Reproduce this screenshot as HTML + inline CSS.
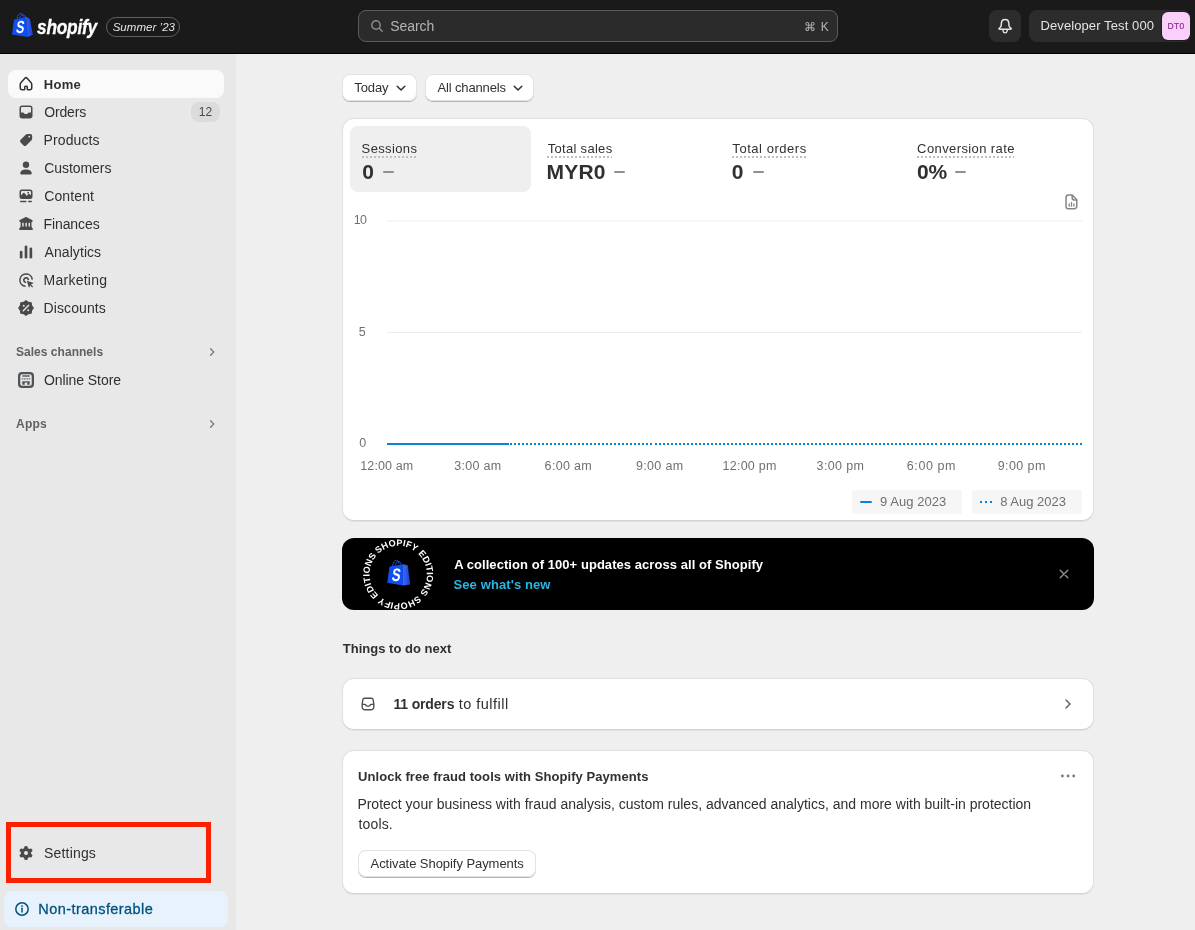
<!DOCTYPE html>
<html lang="en">
<head>
<meta charset="utf-8">
<title>Shopify Admin - Home</title>
<style>
*{box-sizing:border-box;margin:0;padding:0}
html,body{width:1195px;height:930px;overflow:hidden}
body{font-family:"Liberation Sans",sans-serif;background:#efefef;color:#303030;position:relative;font-size:13px}
#app{position:absolute;left:0;top:0;width:1195px;height:930px;will-change:transform;overflow:hidden}
.abs{position:absolute}
.t{position:absolute;white-space:nowrap;line-height:1}
/* top bar */
#top{position:absolute;left:0;top:0;width:1195px;height:54px;background:#1a1a1a;border-bottom:1px solid #000}
#search{position:absolute;left:358px;top:10px;width:480px;height:32px;border:1px solid #5c5c5c;border-radius:8px;background:#2b2b2b}
#bell{position:absolute;left:989px;top:10px;width:32px;height:32px;border-radius:8px;background:#2c2c2c}
#store{position:absolute;left:1029px;top:10px;width:162px;height:32px;border-radius:8px;background:#2c2c2c}
#avatar{position:absolute;left:1162px;top:12px;width:28px;height:28px;border-radius:6px;background:#facffa;box-shadow:0 0 0 1px #1e1e1e}
/* sidebar */
#side{position:absolute;left:0;top:54px;width:236px;height:876px;background:#e8e8e8}
#homebg{position:absolute;left:8px;top:70px;width:216px;height:28px;border-radius:8px;background:#fafafa}
.nav{font-size:14px;color:#303030;left:44px;font-weight:400}
.sec{font-size:13px;color:#616161;left:16px;font-weight:700}
#badge{position:absolute;left:191px;top:102px;width:29px;height:20px;border-radius:8px;background:#dbdbdb}
#redbox{position:absolute;left:6px;top:822px;width:205px;height:61px;border:5px solid #fc2003}
#nont{position:absolute;left:4px;top:891px;width:224px;height:36px;border-radius:8px;background:#e7f2fd}
/* main */
.btn{position:absolute;background:#fff;border-radius:8px;box-shadow:0 1px 0 0 #b5b5b5,0 0 0 1px #e3e3e3 inset;border:0}
.card{position:absolute;left:342px;width:752px;background:#fff;border-radius:12px;border:1px solid #dfdfdf;border-bottom-color:#d2d2d2;box-shadow:0 1px 0 0 rgba(0,0,0,.05)}
#selTab{position:absolute;left:350px;top:126px;width:181px;height:66px;border-radius:8px;background:#efefef}
.lbl{font-size:13px;color:#303030}
.val{font-size:20px;font-weight:700;color:#303030}
.dot{height:2px;background:repeating-linear-gradient(90deg,#bfbfbf 0 2px,transparent 2px 4px)}
.dash{position:absolute;height:2px;width:11px;background:#8c9196;border-radius:1px}
.ax{font-size:12px;color:#6d7175}
#banner{position:absolute;left:342px;top:538px;width:752px;height:72px;border-radius:12px;background:#000}
</style>
</head>
<body>
<div id="app">
<!-- TOPBAR -->
<div id="top">
  <!-- shopify bag -->
  <svg class="abs" style="left:11px;top:12px" width="24" height="27" viewBox="0 0 24 27">
    <defs><linearGradient id="bagg" x1="0" y1="0" x2="1" y2="0"><stop offset="0" stop-color="#3566f7"/><stop offset="1" stop-color="#1a3fd4"/></linearGradient></defs>
    <path d="M6.200 6.600 C6.400 3.600 8 1.400 9.800 1.500 C11 1.600 11.800 2.700 12.200 4.600" fill="none" stroke="#1f55ee" stroke-width="1"/>
    <path d="M8.800 6 C9.400 3.600 10.800 2.400 12.200 2.700 C13.400 3 14 4 14.300 5" fill="none" stroke="#1f55ee" stroke-width="1"/>
    <path d="M3 7.700 L15 4.800 L16.700 24.900 L1 22.400 Z" fill="#0f4ff2"/>
    <path d="M15 4.800 L18.900 6.900 L21.900 22.800 L16.700 24.900 Z" fill="url(#bagg)"/>
    <text transform="translate(8.700 21.100) skewX(-8) scale(.7 1)" text-anchor="middle" font-family="Liberation Sans, sans-serif" font-weight="700" font-size="17.500" fill="#fff">S</text>
  </svg>
  <div class="t" id="wordmark" style="left:36.500px;top:16px;font-size:21px;font-weight:700;font-style:italic;color:#fff;transform-origin:0 0;transform:scaleX(.825);letter-spacing:-.3px;-webkit-text-stroke:.35px #fff">shopify</div>
  <div class="abs" style="left:106px;top:17px;width:74px;height:20px;border:1px solid #616161;border-radius:10px"></div>
  <div class="t" id="summer" style="left:112.66px;top:22px;font-size:11.5px;font-style:italic;color:#e3e3e3;letter-spacing:0.036px">Summer ’23</div>
  <div id="search"></div>
  <svg class="abs" style="left:369px;top:18px" width="16" height="16" viewBox="0 0 16 16"><circle cx="7" cy="7" r="4.200" fill="none" stroke="#8c8c8c" stroke-width="1.400"/><path d="M10.200 10.200 L13.200 13.200" stroke="#8c8c8c" stroke-width="1.400" stroke-linecap="round"/></svg>
  <div class="t" id="searchtxt" style="left:390.32px;top:19px;font-size:14px;color:#b5b5b5;letter-spacing:-0.098px">Search</div>
  <div class="t" id="cmdk" style="left:804.23px;top:21px;font-size:12px;color:#b5b5b5;letter-spacing:0.654px">⌘ K</div>
  <div id="bell"></div>
  <svg class="abs" style="left:995px;top:16px" width="20" height="20" viewBox="0 0 20 20"><path d="M10.100 3.450 C7.900 3.450 6.500 5 6.400 7.200 L6.200 9.600 C6.100 10.600 5.500 11.300 4.600 11.900 C3.600 12.500 3.900 13.300 4.800 13.300 H15.400 C16.300 13.300 16.600 12.500 15.600 11.900 C14.700 11.300 14.100 10.600 14 9.600 L13.800 7.200 C13.700 5 12.300 3.450 10.100 3.450 Z" fill="none" stroke="#e3e3e3" stroke-width="1.500" stroke-linejoin="round"/><path d="M7.900 14 C8.100 15.800 9 16.900 10.100 16.900 C11.200 16.900 12.100 15.800 12.300 14" fill="none" stroke="#e3e3e3" stroke-width="1.400" stroke-linecap="round"/></svg>
  <div id="store"></div>
  <div class="t" id="storetxt" style="left:1040.48px;top:19px;font-size:13px;color:#e3e3e3;letter-spacing:0.101px">Developer Test 000</div>
  <div id="avatar"></div>
  <div class="t" id="avtxt" style="left:1167.42px;top:22px;font-size:8.5px;color:#8e2d8e;font-weight:400;-webkit-text-stroke:.2px #8e2d8e;letter-spacing:0.345px">DT0</div>
</div>
<!-- SIDEBAR -->
<div id="side"></div>
<div id="homebg"></div>
<!-- nav icons: 20x20 boxes at x=16 -->
<svg class="abs ic" style="left:16px;top:74px" width="20" height="20" viewBox="0 0 20 20" fill="#303030"><path fill-rule="evenodd" d="M8.344 3.692a2.25 2.25 0 0 1 3.312 0l3.854 4.19a3.75 3.75 0 0 1 .99 2.538v3.33a2.75 2.75 0 0 1-2.75 2.75h-1.75a1.5 1.5 0 0 1-1.5-1.5v-2h-1v2a1.5 1.5 0 0 1-1.5 1.5h-1.750a2.75 2.75 0 0 1-2.75-2.75v-3.33c0-.94.353-1.847.99-2.539l3.854-4.189zm2.208 1.016a.75.75 0 0 0-1.104 0l-3.854 4.189a2.25 2.25 0 0 0-.594 1.523v3.33c0 .69.56 1.25 1.25 1.25h1.750v-2a1.5 1.5 0 0 1 1.5-1.5h1a1.5 1.5 0 0 1 1.5 1.5v2h1.750c.69 0 1.250-.56 1.250-1.250v-3.330a2.250 2.250 0 0 0-.594-1.523l-3.854-4.190z"/></svg>
<svg class="abs ic" style="left:16px;top:102px" width="20" height="20" viewBox="0 0 20 20" fill="#4a4a4a"><path fill-rule="evenodd" d="M6.25 3.5a2.75 2.75 0 0 0-2.75 2.75v7.5a2.75 2.75 0 0 0 2.75 2.750h7.5a2.75 2.75 0 0 0 2.750-2.750v-7.5a2.75 2.75 0 0 0-2.750-2.750h-7.5zm-1.250 2.750c0-.69.56-1.250 1.250-1.250h7.5c.69 0 1.250.56 1.250 1.250v4.250h-1.880a1.5 1.5 0 0 0-1.200.6l-.6.8a.25.25 0 0 1-.2.1h-2.240a.25.25 0 0 1-.2-.1l-.6-.8a1.5 1.5 0 0 0-1.200-.6h-1.880v-4.250z"/></svg>
<svg class="abs ic" style="left:16px;top:130px" width="20" height="20" viewBox="0 0 20 20" fill="#4a4a4a"><path transform="translate(10.100 9.950) scale(.955) translate(-10.150 -9.900)" fill-rule="evenodd" d="M11.6 3.6 H14.6 A1.9 1.9 0 0 1 16.5 5.500 V8.4 A2.4 2.4 0 0 1 15.800 10.100 L10.300 15.600 A2 2 0 0 1 7.500 15.600 L4.400 12.500 A2 2 0 0 1 4.400 9.700 L9.900 4.300 A2.400 2.400 0 0 1 11.600 3.600 Z M13.500 5.600 A0.900 0.900 0 1 0 13.500 7.400 A0.900 0.900 0 1 0 13.500 5.600 Z"/></svg>
<svg class="abs ic" style="left:16px;top:158px" width="20" height="20" viewBox="0 0 20 20" fill="#4a4a4a"><circle cx="10" cy="6.800" r="3.200"/><path d="M4.300 15.200 C4.300 12.900 6.800 11.500 10 11.500 C13.200 11.500 15.700 12.900 15.700 15.200 C15.700 15.900 15.200 16.500 14.400 16.500 H5.600 C4.800 16.500 4.300 15.900 4.300 15.200 Z"/></svg>
<svg class="abs ic" style="left:16px;top:186px" width="20" height="20" viewBox="0 0 20 20" fill="#4a4a4a"><path fill-rule="evenodd" d="M6 3.500 H14 A2.500 2.500 0 0 1 16.500 6 V10.500 A2.500 2.500 0 0 1 14 13 H6 A2.500 2.500 0 0 1 3.500 10.500 V6 A2.500 2.500 0 0 1 6 3.500 Z M5 9.500 V6 A1 1 0 0 1 6 5 H14 A1 1 0 0 1 15 6 V9.300 L13.600 8 A0.800 0.800 0 0 0 12.500 8 L10.800 9.700 L8.400 7 A0.800 0.800 0 0 0 7.200 7 Z M12.200 5.800 A0.900 0.900 0 1 0 12.200 7.600 A0.900 0.900 0 1 0 12.200 5.800 Z"/><rect x="4" y="14.800" width="6.500" height="1.500" rx=".75"/><rect x="12" y="14.800" width="4" height="1.500" rx=".75"/></svg>
<svg class="abs ic" style="left:16px;top:214px" width="20" height="20" viewBox="0 0 20 20" fill="#4a4a4a"><path d="M9.300 3.300 C9.700 3.050 10.300 3.050 10.700 3.300 L16.200 6 C16.900 6.400 16.700 7.900 16 7.900 H4 C3.300 7.900 3.100 6.400 3.800 6 Z"/><rect x="4.600" y="7.500" width="10.900" height="6"/><rect x="6.250" y="8.800" width="1.450" height="3.900" fill="#e8e8e8"/><rect x="9.400" y="8.800" width="1.450" height="3.900" fill="#e8e8e8"/><rect x="12.550" y="8.800" width="1.450" height="3.900" fill="#e8e8e8"/><path d="M4.600 12.800 H15.400 L16.700 14.400 C17.100 15.100 16.700 16 16 16 H4 C3.300 16 2.900 15.100 3.300 14.400 Z"/></svg>
<svg class="abs ic" style="left:16px;top:242px" width="20" height="20" viewBox="0 0 20 20" fill="#4a4a4a"><rect x="3.800" y="8.700" width="2.700" height="7.800" rx="1.350"/><rect x="8.650" y="3.500" width="2.700" height="13" rx="1.350"/><rect x="13.500" y="5.600" width="2.700" height="10.900" rx="1.350"/></svg>
<svg class="abs ic" style="left:16px;top:270px" width="20" height="20" viewBox="0 0 20 20" fill="none" stroke="#4a4a4a" stroke-width="1.500" stroke-linecap="round"><path d="M16.200 9 A6.200 6.200 0 1 0 9 16.200"/><path d="M12.300 9.400 A2.300 2.300 0 1 0 9.400 12.300" stroke-width="1.700"/><path d="M10.800 10.800 L17.800 13.100 L15 14.500 L17.100 16.800 L16.200 17.600 L14.200 15.400 L13 18 Z" fill="#4a4a4a" stroke="none"/></svg>
<svg class="abs ic" style="left:16px;top:298px" width="20" height="20" viewBox="0 0 20 20" fill="#4a4a4a"><path d="M10.00 2.70 L12.30 4.46 L15.16 4.84 L15.54 7.70 L17.30 10.00 L15.54 12.30 L15.16 15.16 L12.30 15.54 L10.00 17.30 L7.70 15.54 L4.84 15.16 L4.46 12.30 L2.70 10.00 L4.46 7.70 L4.84 4.84 L7.70 4.46 Z" stroke="#4a4a4a" stroke-width="1.200" stroke-linejoin="round"/><path d="M7.300 12.700 L12.700 7.300" stroke="#e8e8e8" stroke-width="1.400" stroke-linecap="round"/><circle cx="7.800" cy="7.800" r=".950" fill="#e8e8e8"/><circle cx="12.200" cy="12.200" r=".950" fill="#e8e8e8"/></svg>
<div class="t nav" id="n1" style="top:78px;font-weight:700;left:43.82px;font-size:13px;letter-spacing:0.245px">Home</div>
<div class="t nav" id="n2" style="top:105px;left:44.29px;font-size:14px;letter-spacing:-0.167px">Orders</div>
<div class="t nav" id="n3" style="top:133px;left:43.56px;font-size:14px;letter-spacing:0.111px">Products</div>
<div class="t nav" id="n4" style="top:161px;left:44.15px;font-size:14px;letter-spacing:-0.044px">Customers</div>
<div class="t nav" id="n5" style="top:189px;left:44.15px;font-size:14px;letter-spacing:0.129px">Content</div>
<div class="t nav" id="n6" style="top:217px;left:43.56px;font-size:14px;letter-spacing:-0.104px">Finances</div>
<div class="t nav" id="n7" style="top:245px;left:44.59px;font-size:14px;letter-spacing:0.065px">Analytics</div>
<div class="t nav" id="n8" style="top:273px;left:43.56px;font-size:14px;letter-spacing:0.242px">Marketing</div>
<div class="t nav" id="n9" style="top:301px;left:43.56px;font-size:14px;letter-spacing:0.098px">Discounts</div>
<div id="badge"></div>
<div class="t" id="b12" style="left:198.86px;top:106px;font-size:12px;color:#4a4a4a;letter-spacing:0.029px">12</div>
<div class="t sec" id="s1" style="top:346px;left:15.99px;font-size:12px;letter-spacing:0.030px">Sales channels</div>
<svg class="abs" style="left:206px;top:346px" width="12" height="12" viewBox="0 0 12 12"><path d="M4.500 2.700 L7.800 6 L4.500 9.300" fill="none" stroke="#787878" stroke-width="1.300" stroke-linecap="round" stroke-linejoin="round"/></svg>
<svg class="abs" style="left:18px;top:372px" width="16" height="16" viewBox="0 0 16 16"><rect width="16" height="16" rx="4" fill="#4f5459"/><rect x="2.300" y="2.300" width="11.400" height="11.400" rx="1.800" fill="#e8e8e8"/><rect x="4.300" y="3.300" width="7.400" height="1.400" fill="#4f5459"/><path d="M3.300 6.400 H12.700 L11.600 7.700 L10.500 6.800 L9.300 7.700 L8 6.800 L6.700 7.700 L5.500 6.800 L4.400 7.700 Z" fill="#4f5459"/><path d="M4.300 9.200 H11.700 V12.700 H9.300 V10.400 H6.700 V12.700 H4.300 Z" fill="#4f5459"/></svg>
<div class="t nav" id="n10" style="top:373px;left:43.98px;font-size:14px;letter-spacing:-0.070px">Online Store</div>
<div class="t sec" id="s2" style="top:418px;left:16.02px;font-size:12px;letter-spacing:0.236px">Apps</div>
<svg class="abs" style="left:206px;top:418px" width="12" height="12" viewBox="0 0 12 12"><path d="M4.500 2.700 L7.800 6 L4.500 9.300" fill="none" stroke="#787878" stroke-width="1.300" stroke-linecap="round" stroke-linejoin="round"/></svg>
<div id="redbox"></div>
<svg class="abs ic" style="left:16px;top:843px" width="20" height="20" viewBox="0 0 20 20" fill="#4a4a4a"><g transform="translate(10 10)"><circle r="5.200"/><rect x="-1.800" y="-7" width="3.600" height="14" rx="1.500"/><rect x="-1.800" y="-7" width="3.600" height="14" rx="1.500" transform="rotate(60)"/><rect x="-1.800" y="-7" width="3.600" height="14" rx="1.500" transform="rotate(120)"/><circle r="2" fill="#e8e8e8"/></g></svg>
<div class="t nav" id="n11" style="top:846px;left:44.10px;font-size:14px;letter-spacing:0.170px">Settings</div>
<div id="nont"></div>
<svg class="abs" style="left:14px;top:901px" width="16" height="16" viewBox="0 0 16 16" fill="none" stroke="#00527c" stroke-width="1.500"><circle cx="8" cy="8" r="6.200"/><path d="M8 7.300 V11" stroke-linecap="round"/><circle cx="8" cy="5" r=".6" fill="#00527c" stroke-width=".6"/></svg>
<div class="t" id="nonttxt" style="left:38.37px;top:902px;font-size:14.5px;color:#00527c;font-weight:400;letter-spacing:0.428px;-webkit-text-stroke:.3px #00527c">Non-transferable</div>
<!-- MAIN -->
<div id="main">
<div class="btn" style="left:342px;top:74px;width:75px;height:27px"></div>
<div class="t" id="today" style="left:354.33px;top:81px;font-size:13px;color:#303030;letter-spacing:-0.108px">Today</div>
<svg class="abs" style="left:395px;top:82px" width="12" height="12" viewBox="0 0 12 12"><path d="M2.200 4.300 L6 8 L9.800 4.300" fill="none" stroke="#303030" stroke-width="1.500" stroke-linecap="round" stroke-linejoin="round"/></svg>
<div class="btn" style="left:425px;top:74px;width:109px;height:27px"></div>
<div class="t" id="allch" style="left:437.44px;top:81px;font-size:13px;color:#303030;letter-spacing:-0.139px">All channels</div>
<svg class="abs" style="left:512px;top:82px" width="12" height="12" viewBox="0 0 12 12"><path d="M2.200 4.300 L6 8 L9.800 4.300" fill="none" stroke="#303030" stroke-width="1.500" stroke-linecap="round" stroke-linejoin="round"/></svg>

<!-- analytics card -->
<div class="card" style="top:118px;height:403px"></div>
<div id="selTab"></div>
<div class="t lbl" id="l1" style="left:361.62px;top:142px;font-size:13px;letter-spacing:0.368px">Sessions</div>
<div class="t lbl" id="l2" style="left:547.63px;top:142px;font-size:13px;letter-spacing:0.312px">Total sales</div>
<div class="t lbl" id="l3" style="left:732.35px;top:142px;font-size:13px;letter-spacing:0.544px">Total orders</div>
<div class="t lbl" id="l4" style="left:917.10px;top:142px;font-size:13px;letter-spacing:0.401px">Conversion rate</div>
<div class="abs dot" id="d1" style="left:362px;top:156px;width:55px"></div>
<div class="abs dot" id="d2" style="left:547px;top:156px;width:65px"></div>
<div class="abs dot" id="d3" style="left:732px;top:156px;width:74px"></div>
<div class="abs dot" id="d4" style="left:917px;top:156px;width:97px"></div>
<div class="t val" id="v1" style="left:362.26px;top:161px;font-size:21px;letter-spacing:0.000px">0</div>
<div class="t val" id="v2" style="left:546.41px;top:161px;font-size:21px;letter-spacing:0.252px">MYR0</div>
<div class="t val" id="v3" style="left:731.81px;top:161px;font-size:21px;letter-spacing:0.000px">0</div>
<div class="t val" id="v4" style="left:917.01px;top:161px;font-size:21px;letter-spacing:-0.265px">0%</div>
<div class="dash" style="left:383px;top:171px"></div>
<div class="dash" style="left:614px;top:171px"></div>
<div class="dash" style="left:753px;top:171px"></div>
<div class="dash" style="left:955px;top:171px"></div>
<!-- report icon -->
<svg class="abs" style="left:1062px;top:192px" width="20" height="20" viewBox="0 0 20 20" fill="none" stroke="#858585" stroke-width="1.500" stroke-linejoin="round"><path d="M6.550 3 H10.200 L14.750 7.800 V14.500 A2.250 2.250 0 0 1 12.500 16.750 H6.300 A2.250 2.250 0 0 1 4.050 14.500 V5.500 A2.500 2.500 0 0 1 6.550 3 Z"/><path d="M10.200 3.200 V6 A1.900 1.900 0 0 0 12.100 7.900 H14.600"/><path d="M7.200 11.800 V14.200 M9.500 10.500 V14.200 M11.900 11.800 V14.200" stroke-linecap="round" stroke-width="1.300"/></svg>
<!-- chart -->
<div class="abs" style="left:387px;top:220px;width:695px;height:2px;background:#f6f6f7"></div>
<div class="abs" style="left:387px;top:332px;width:695px;height:1px;background:#ececee"></div>
<div class="t ax" id="y10" style="left:353.63px;top:214px;font-size:12.5px;letter-spacing:-0.593px">10</div>
<div class="t ax" id="y5" style="left:358.75px;top:326px;font-size:12.5px;letter-spacing:0.000px">5</div>
<div class="t ax" id="y0" style="left:359.30px;top:437px;font-size:12.5px;letter-spacing:0.000px">0</div>
<div class="abs" style="left:387px;top:443px;width:122px;height:2px;background:#0b84d6"></div>
<div class="abs" id="dotline" style="left:510px;top:443px;width:572px;height:2px;background:repeating-linear-gradient(90deg,#0b84d6 0 2px,transparent 2px 4.0141px)"></div>
<div class="t ax" id="x1" style="left:360.29px;top:460px;font-size:12.5px;letter-spacing:0.120px">12:00 am</div>
<div class="t ax" id="x2" style="left:454.13px;top:460px;font-size:12.5px;letter-spacing:0.324px">3:00 am</div>
<div class="t ax" id="x3" style="left:544.61px;top:460px;font-size:12.5px;letter-spacing:0.320px">6:00 am</div>
<div class="t ax" id="x4" style="left:635.95px;top:460px;font-size:12.5px;letter-spacing:0.337px">9:00 am</div>
<div class="t ax" id="x5" style="left:722.61px;top:460px;font-size:12.5px;letter-spacing:0.234px">12:00 pm</div>
<div class="t ax" id="x6" style="left:816.61px;top:460px;font-size:12.5px;letter-spacing:0.351px">3:00 pm</div>
<div class="t ax" id="x7" style="left:906.85px;top:460px;font-size:12.5px;letter-spacing:0.569px">6:00 pm</div>
<div class="t ax" id="x8" style="left:997.74px;top:460px;font-size:12.5px;letter-spacing:0.413px">9:00 pm</div>
<!-- legend -->
<div class="abs" style="left:852px;top:490px;width:110px;height:24px;background:#f6f6f7;border-radius:2px"></div>
<div class="abs" style="left:972px;top:490px;width:110px;height:24px;background:#f6f6f7;border-radius:2px"></div>
<div class="abs" style="left:860px;top:501px;width:12px;height:2px;background:#0b84d6;border-radius:1px"></div>
<div class="abs" style="left:980px;top:501px;width:12px;height:2px;background:repeating-linear-gradient(90deg,#0b84d6 0 2px,transparent 2px 5px)"></div>
<div class="t ax" id="lg1" style="left:880.05px;top:495px;font-size:13px;letter-spacing:0.045px">9 Aug 2023</div>
<div class="t ax" id="lg2" style="left:1000.21px;top:495px;font-size:13px;letter-spacing:0.005px">8 Aug 2023</div>

<!-- banner -->
<div id="banner"></div>
<svg class="abs" style="left:358px;top:535px" width="80" height="80" viewBox="0 0 80 80">
  <defs><path id="circ" d="M40.200 10.800 a28.700 28.700 0 1 1 -0.010 0"/><linearGradient id="bg2" x1="0" y1="0" x2="1" y2="0"><stop offset="0" stop-color="#3d6bfa"/><stop offset="1" stop-color="#1b3fd0"/></linearGradient></defs>
  <g transform="rotate(-44 40.200 39.500)"><text font-family="Liberation Sans, sans-serif" font-weight="700" font-size="9.100" fill="#fff"><textPath href="#circ" startOffset="0" textLength="180" lengthAdjust="spacing">SHOPIFY&#160;EDITIONS&#160;SHOPIFY&#160;EDITIONS&#160;</textPath></text></g>
  <path d="M34.600 31 C34.800 27.600 36.600 25.300 38.400 25.400 C39.800 25.500 40.600 26.800 41 28.800" fill="none" stroke="#2a55e8" stroke-width=".9"/>
  <path d="M37.200 30.400 C37.900 27.600 39.600 26 41 26.500 C42.200 27 42.800 28.300 43 29.600" fill="none" stroke="#2a55e8" stroke-width=".9"/>
  <path d="M31.600 31.600 L44.800 29.200 L45 50.400 L29.200 47.700 Z" fill="#0f4ff2"/>
  <path d="M44.800 29.200 L49.700 30.300 L52.200 49.500 L45 50.400 Z" fill="url(#bg2)"/>
  <text transform="translate(37.600 46.300) skewX(-8) scale(.72 1)" x="0" y="0" text-anchor="middle" font-family="Liberation Sans, sans-serif" font-weight="700" font-size="18" fill="#fff">S</text>
</svg>
<div class="t" id="bn1" style="left:454.13px;top:558px;font-size:13px;font-weight:700;color:#fff;letter-spacing:0.056px">A collection of 100+ updates across all of Shopify</div>
<div class="t" id="bn2" style="left:453.52px;top:578px;font-size:13px;font-weight:700;color:#2bb5e0;letter-spacing:0.103px">See what's new</div>
<svg class="abs" style="left:1058px;top:568px" width="12" height="12" viewBox="0 0 12 12"><path d="M2.200 2.200 L9.800 9.800 M9.800 2.200 L2.200 9.800" stroke="#8f8f8f" stroke-width="1.400" stroke-linecap="round"/></svg>

<div class="t" id="things" style="left:342.79px;top:642px;font-size:13px;font-weight:700;color:#303030;letter-spacing:0.012px">Things to do next</div>
<div class="card" style="top:678px;height:52px"></div>
<svg class="abs" style="left:358px;top:694px" width="20" height="20" viewBox="0 0 20 20" fill="none" stroke="#4a4f54" stroke-width="1.400"><path d="M6.600 4.200 H13.400 A1.800 1.800 0 0 1 15.150 5.600 L15.800 10 V13 A2.800 2.800 0 0 1 13 15.800 H7 A2.800 2.800 0 0 1 4.200 13 V10 L4.850 5.600 A1.800 1.800 0 0 1 6.600 4.200 Z"/><path d="M4.400 10.400 H6.800 C7.300 10.400 7.600 10.700 7.800 11.100 C8.100 11.700 8.600 12.100 9.300 12.100 H10.700 C11.400 12.100 11.900 11.700 12.200 11.100 C12.400 10.700 12.700 10.400 13.200 10.400 H15.600"/></svg>
<div class="t" id="ord1a" style="left:393.48px;top:697px;font-size:14px;color:#303030;font-weight:700;letter-spacing:-0.161px">11 orders</div>
<div class="t" id="ord1b" style="left:458.75px;top:697px;font-size:14.5px;color:#303030;letter-spacing:0.470px">to fulfill</div>
<svg class="abs" style="left:1061px;top:697px" width="14" height="14" viewBox="0 0 14 14"><path d="M5 3 L9 7 L5 11" fill="none" stroke="#616161" stroke-width="1.500" stroke-linecap="round" stroke-linejoin="round"/></svg>

<div class="card" style="top:750px;height:144px"></div>
<div class="t" id="fr1" style="left:357.99px;top:770px;font-size:13px;font-weight:700;color:#303030;letter-spacing:0.067px">Unlock free fraud tools with Shopify Payments</div>
<div class="t" id="fr2" style="left:357.38px;top:797px;font-size:14px;color:#303030;letter-spacing:-0.001px">Protect your business with fraud analysis, custom rules, advanced analytics, and more with built-in protection</div>
<div class="t" id="fr3" style="left:358.49px;top:817px;font-size:14px;color:#303030;letter-spacing:0.163px">tools.</div>
<div class="btn" style="left:358px;top:850px;width:178px;height:27px"></div>
<div class="t" id="act" style="left:370.52px;top:857px;font-size:13px;color:#303030;letter-spacing:-0.056px">Activate Shopify Payments</div>
<svg class="abs" style="left:1058px;top:766px" width="20" height="20" viewBox="0 0 20 20" fill="#7a7a7a"><circle cx="4.400" cy="10" r="1.400"/><circle cx="10.100" cy="10" r="1.400"/><circle cx="15.700" cy="10" r="1.400"/></svg>
</div>
</div>
</body>
</html>
